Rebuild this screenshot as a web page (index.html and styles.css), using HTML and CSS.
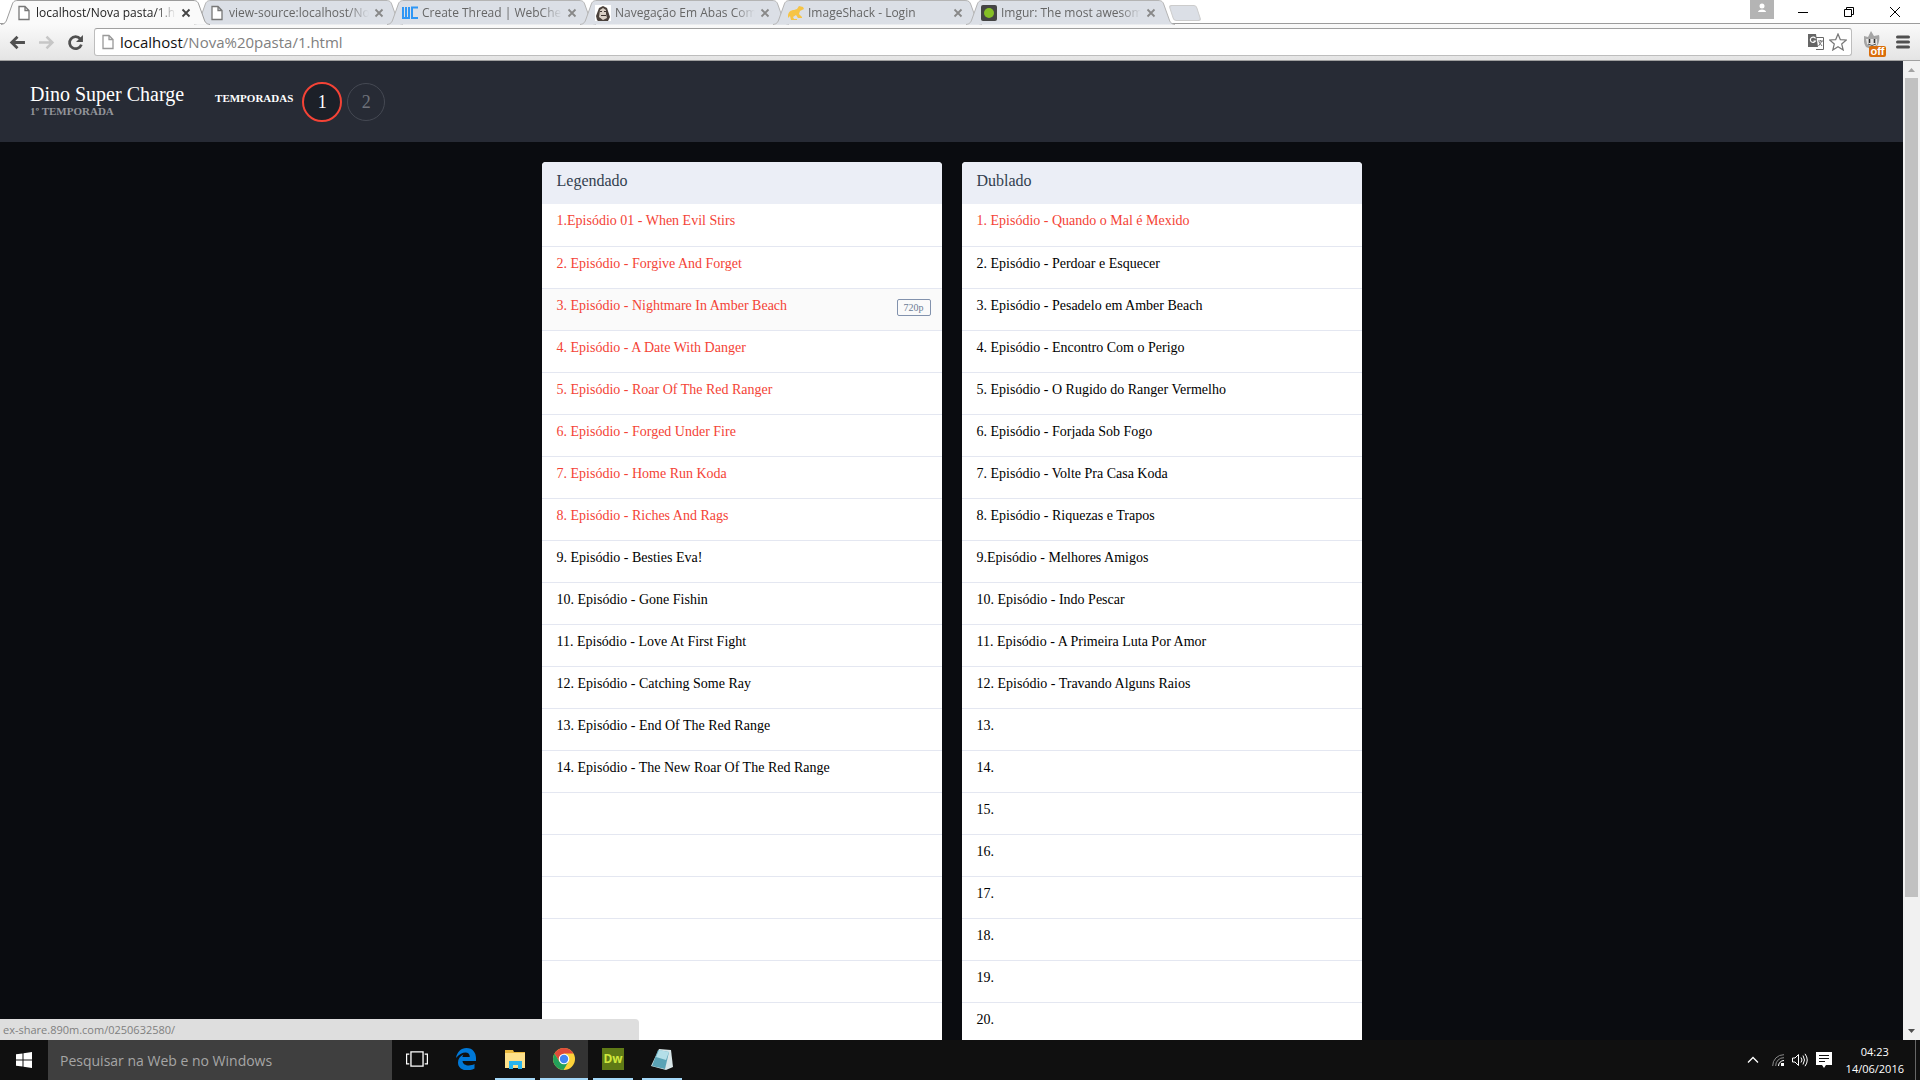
FILE: index.html
```html
<!DOCTYPE html>
<html lang="pt-BR">
<head>
<meta charset="utf-8">
<title>localhost/Nova pasta/1.html</title>
<link rel="stylesheet" href="styles.css">
</head>
<body>
<svg class="defs" aria-hidden="true">
  <symbol id="tab-shape" viewBox="0 0 209 25"><path d="M0 24.500C4 24 5 22 6 19L11 5C12 2 13 .5 17 .5H192C196 .5 197 2 198 5L203 19C204 22 205 24 209 24.500"/></symbol>
  <symbol id="page" viewBox="0 0 12 16"><path d="M1 1.500H7L11 5.500V14.500H1ZM7 1.500V5.500H11" fill="#fff" stroke="currentColor" stroke-width="1.300"/></symbol>
  <symbol id="x" viewBox="0 0 10 10"><path d="M1.500 1.500L8.500 8.500M8.500 1.500L1.500 8.500" stroke="currentColor" stroke-width="1.800"/></symbol>
</svg>

<div class="window">
  <div class="tabstrip">
    <div class="tab active"><svg class="shape"><use href="#tab-shape"/></svg><svg class="fav" viewBox="-2 0 16 16"><use href="#page" width="12" height="16"/></svg><span class="tab-title">localhost/Nova pasta/1.ht</span><button class="close" aria-label="Fechar guia"><svg><use href="#x"/></svg></button></div>
    <div class="tab"><svg class="shape"><use href="#tab-shape"/></svg><svg class="fav" viewBox="-2 0 16 16"><use href="#page" width="12" height="16"/></svg><span class="tab-title">view-source:localhost/No</span><button class="close" aria-label="Fechar guia"><svg><use href="#x"/></svg></button></div>
    <div class="tab"><svg class="shape"><use href="#tab-shape"/></svg><svg class="fav" viewBox="0 0 16 16"><path d="M1 2V13H7V2M4 2V13M16 2.500H10V13H16" fill="none" stroke="#2f97f5" stroke-width="2"/></svg><span class="tab-title">Create Thread | WebCheat</span><button class="close" aria-label="Fechar guia"><svg><use href="#x"/></svg></button></div>
    <div class="tab"><svg class="shape"><use href="#tab-shape"/></svg><svg class="fav" viewBox="0 0 16 16"><path fill="#fff" d="M0 0H16V16H0Z"/><path fill="#4a413b" d="M2 15L1 11L4 3L8 1L12 3L15 12L13 16H3Z"/><path fill="#d8cfc4" d="M5 5L8 3L11 5V9L12 13L8 15L4 12Z"/><path stroke="#3c342f" d="M5 6.500H7M9 6.500H11M6 10.500H11"/></svg><span class="tab-title">Navegação Em Abas Com</span><button class="close" aria-label="Fechar guia"><svg><use href="#x"/></svg></button></div>
    <div class="tab"><svg class="shape"><use href="#tab-shape"/></svg><svg class="fav" viewBox="0 0 16 16"><path fill="#f6c445" d="M0 11C0 7 3 5 6 5L9 4L11 1L15 2L16 4L12 6L11 9L14 12V13H10L8 10L5 12L6 14H9V15H3L2 11L0 13Z"/></svg><span class="tab-title">ImageShack - Login</span><button class="close" aria-label="Fechar guia"><svg><use href="#x"/></svg></button></div>
    <div class="tab"><svg class="shape"><use href="#tab-shape"/></svg><svg class="fav" viewBox="0 0 16 16"><rect width="16" height="16" rx="2" fill="#444"/><circle cx="8" cy="8" r="5" fill="#85bf25"/></svg><span class="tab-title">Imgur: The most awesome</span><button class="close" aria-label="Fechar guia"><svg><use href="#x"/></svg></button></div>
    <button class="newtab" aria-label="Nova guia"></button>
    <div class="winbtns">
      <button class="user" aria-label="Usuário"><svg viewBox="0 0 24 19"><circle cx="12" cy="6" r="2.500" fill="#fff"/><path fill="#fff" d="M8 12C8 8.500 16 8.500 16 12Z"/></svg></button>
      <button aria-label="Minimizar"><svg viewBox="0 0 46 24"><path d="M18 12.500H28"/></svg></button>
      <button aria-label="Restaurar"><svg viewBox="0 0 46 24"><path d="M18.500 9.500H25.500V16.500H18.500ZM20.500 9.500V7.500H27.500V14.500H25.500"/></svg></button>
      <button aria-label="Fechar"><svg viewBox="0 0 46 24"><path d="M18 7L28 17M28 7L18 17"/></svg></button>
    </div>
  </div>

  <div class="toolbar">
    <button aria-label="Voltar"><svg viewBox="0 0 16 16"><path d="M15 8H3M8 2.500L2.500 8L8 13.500" fill="none" stroke="#505050" stroke-width="2.600"/></svg></button>
    <button aria-label="Avançar"><svg viewBox="0 0 16 16"><path d="M1 8H13M8 2.500L13.500 8L8 13.500" fill="none" stroke="#c6c6c6" stroke-width="2.400"/></svg></button>
    <button aria-label="Recarregar"><svg viewBox="0 0 16 16"><path d="M12.500 4.500A5.700 5.700 0 1 0 13.500 10" fill="none" stroke="#505050" stroke-width="2.600"/><path d="M15 1V7.500H8.500Z" fill="#505050"/></svg></button>
    <div class="omnibox">
      <svg class="doc" viewBox="0 0 12 16"><use href="#page"/></svg>
      <label class="url" for="url"><b>localhost</b>/Nova%20pasta/1.html</label>
      <input id="url" type="text">
      <svg class="tool" viewBox="0 0 16 16"><path fill="#fff" stroke="#666" d="M6 3.500H15.500V15.500H8"/><path fill="#666" d="M0 0H8L10 13H0Z"/><path d="M7.500 4.500A2.700 2.700 0 1 0 7.500 7H5.500" fill="none" stroke="#fff" stroke-width="1.200"/><path d="M10 7H15M12.500 6V7M14 7L10.500 12M11 8L14 12" fill="none" stroke="#777"/></svg>
      <svg class="star" viewBox="0 0 18 18"><path d="M9 1L11.300 6.600L17.300 7L12.700 11L14.200 17L9 13.700L3.800 17L5.300 11L.7 7L6.700 6.600Z" fill="#fff" stroke="#777" stroke-width="1.200"/></svg>
    </div>
    <button class="ext" aria-label="Extensão"><svg viewBox="0 0 22 24"><path fill="#a5a5a5" d="M2 17C-1 12 0 9 0 6L4 7L7 1L10 6L15 5C16 9 15 15 12 17L7 19Z"/><path fill="#e4e4e4" d="M2 9H13V15L8 17L3 14Z"/><path d="M5.500 9V13M10.500 9V13" fill="none" stroke="#333" stroke-width="1.600"/><path d="M4 14Q8 17 12 14" fill="none" stroke="#555"/></svg><span>off</span></button>
    <button class="menu" aria-label="Menu"><svg viewBox="0 0 14 14"><path d="M1.500 2H12.500M1.500 7H12.500M1.500 12H12.500" stroke="#505050" stroke-width="3" stroke-linecap="round"/></svg></button>
  </div>

  <div class="viewport">
    <div class="site">
      <header class="topbar">
        <div class="show"><h1>Dino Super Charge</h1><p>1º TEMPORADA</p></div>
        <span class="label">TEMPORADAS</span>
        <nav class="seasons"><a class="current" href="#">1</a><a href="#">2</a></nav>
      </header>
      <main class="lists">
        <section class="card">
          <h2>Legendado</h2>
          <ul>
            <li><a href="#">1.Episódio 01 - When Evil Stirs</a></li>
            <li><a href="#">2. Episódio - Forgive And Forget</a></li>
            <li class="hover"><a href="#">3. Episódio - Nightmare In Amber Beach</a><span class="badge">720p</span></li>
            <li><a href="#">4. Episódio - A Date With Danger</a></li>
            <li><a href="#">5. Episódio - Roar Of The Red Ranger</a></li>
            <li><a href="#">6. Episódio - Forged Under Fire</a></li>
            <li><a href="#">7. Episódio - Home Run Koda</a></li>
            <li><a href="#">8. Episódio - Riches And Rags</a></li>
            <li>9. Episódio - Besties Eva!</li>
            <li>10. Episódio - Gone Fishin</li>
            <li>11. Episódio - Love At First Fight</li>
            <li>12. Episódio - Catching Some Ray</li>
            <li>13. Episódio - End Of The Red Range</li>
            <li>14. Episódio - The New Roar Of The Red Range</li>
            <li></li><li></li><li></li><li></li><li></li><li></li>
          </ul>
        </section>
        <section class="card">
          <h2>Dublado</h2>
          <ul>
            <li><a href="#">1. Episódio - Quando o Mal é Mexido</a></li>
            <li>2. Episódio - Perdoar e Esquecer</li>
            <li>3. Episódio - Pesadelo em Amber Beach</li>
            <li>4. Episódio - Encontro Com o Perigo</li>
            <li>5. Episódio - O Rugido do Ranger Vermelho</li>
            <li>6. Episódio - Forjada Sob Fogo</li>
            <li>7. Episódio - Volte Pra Casa Koda</li>
            <li>8. Episódio - Riquezas e Trapos</li>
            <li>9.Episódio - Melhores Amigos</li>
            <li>10. Episódio - Indo Pescar</li>
            <li>11. Episódio - A Primeira Luta Por Amor</li>
            <li>12. Episódio - Travando Alguns Raios</li>
            <li>13.</li><li>14.</li><li>15.</li><li>16.</li><li>17.</li><li>18.</li><li>19.</li><li>20.</li>
          </ul>
        </section>
      </main>
    </div>
    <div class="scrollbar">
      <svg viewBox="0 0 17 17"><path d="M5 11L8.500 7L12 11Z" fill="#a3a3a3"/></svg>
      <div class="track"><div class="thumb"></div></div>
      <svg viewBox="0 0 17 17"><path d="M5 6L8.500 10L12 6Z" fill="#505050"/></svg>
    </div>
    <div class="status">ex-share.890m.com/0250632580/</div>
  </div>

  <div class="taskbar">
    <button class="start" aria-label="Iniciar"><svg viewBox="0 0 16 16"><path fill="#fff" d="M0 2.300L6.500 1.400V7.500H0ZM7.500 1.200L16 0V7.500H7.500ZM0 8.500H6.500V14.600L0 13.700ZM7.500 8.500H16V16L7.500 14.800Z"/></svg></button>
    <input class="search" type="text" placeholder="Pesquisar na Web e no Windows" aria-label="Pesquisar">
    <button class="app" aria-label="Visão de tarefas"><svg viewBox="0 0 20 16"><path d="M4.500 1.500H15.500V14.500H4.500ZM3 3.500H.5V12.500H3M17 3.500H19.500V12.500H17" fill="none" stroke="#fff" stroke-width="1.200"/></svg></button>
    <button class="app" aria-label="Edge"><svg viewBox="0 0 20 22"><path fill="#0078d7" d="M0 10C1 4 5 0 10.500 0C17 0 20 5 20 10V13H6.500C7 18 14 18.500 18.500 16V20.500C12 24 2 22.500 2 14.500C2 11 4 8 7.500 6.500C6.700 7.500 6.500 8.500 6.400 9H13.800C13.800 3 6 3 0 10Z"/></svg></button>
    <button class="app open first" aria-label="Explorador"><svg viewBox="0 0 22 20"><path fill="#e9b83e" d="M1 1H9L10 3H21V19H1Z"/><path fill="#fde08a" d="M1 4H21V19H1Z"/><path fill="#2ab5ee" d="M5 12H18V20H14V16H9V20H5Z"/></svg></button>
    <button class="app open focus" aria-label="Chrome"><svg viewBox="0 0 22 22"><circle cx="11" cy="11" r="11" fill="#fdd23a"/><path fill="#de4b3b" d="M1.500 5.500A11 11 0 0 1 20.500 5.500H11L6.300 13.800Z"/><path fill="#23a05a" d="M1.500 5.500A11 11 0 0 0 10.500 22L15.500 13.600H6.300Z"/><circle cx="11" cy="11" r="5.300" fill="#fff"/><circle cx="11" cy="11" r="4.200" fill="#4285f4"/></svg></button>
    <button class="app open" aria-label="Dreamweaver"><span class="dw">Dw</span></button>
    <button class="app open" aria-label="Bloco de notas"><svg viewBox="0 0 22 22"><path fill="#d9e6e8" d="M8 1L20 2L22 19L15 22L0 18Z"/><path fill="#5ba3b5" d="M7 2L18 4L14 21L1 18Z"/><path fill="#b4dfe8" d="M8 2L18 4L15 12L5 9Z"/></svg></button>
    <div class="tray">
      <svg class="t12 up" viewBox="0 0 12 12"><path d="M1 8.500L6 3.500L11 8.500" fill="none" stroke="#fff" stroke-width="1.300"/></svg>
      <svg class="t12" viewBox="0 0 12 12"><path d="M.7 12A11 11 0 0 1 12 .7M3.700 12A8 8 0 0 1 12 3.700" fill="none" stroke="#8a8a8a"/><path d="M6.500 12A5.500 5.500 0 0 1 12 6.500" fill="none" stroke="#fff"/><path fill="#fff" d="M9 12V9H12V12Z"/></svg>
      <svg class="t16" viewBox="0 0 16 14"><path d="M.5 5H3L6.500 1.500V12.500L3 9H.5ZM9 4.500Q11 7 9 9.500M11 2.500Q14 7 11 11.500M13 .8Q17.500 7 13 13.200" fill="none" stroke="#fff"/></svg>
      <svg class="t16" viewBox="0 0 16 16"><path fill="#fff" d="M0 0H16V13H10L8 16L6 13H0Z"/><path d="M3 3.500H13M3 6.500H13M3 9.500H9" stroke="#111"/></svg>
      <div class="clock"><time>04:23</time><time>14/06/2016</time></div>
      <button class="desktop" aria-label="Mostrar área de trabalho"></button>
    </div>
  </div>
</div>
</body>
</html>
```
FILE: styles.css
```css
* { box-sizing: border-box; }
body { margin: 0; font-family: "Open Sans", "Noto Sans", sans-serif; }
button { border: 0; padding: 0; background: none; display: flex; align-items: center; justify-content: center; font: inherit; }
svg { display: block; flex: none; }
.defs { position: absolute; width: 0; height: 0; }
.window { display: flex; flex-direction: column; height: 100vh; overflow: hidden; }

/* Browser chrome */
.tabstrip { display: flex; height: 24px; background: #fff; border-bottom: 1px solid #9c9c9c; flex: none; padding-left: 1px; }
.tab { position: relative; display: flex; align-items: center; width: 209px; height: 24px; margin-right: -16px; padding: 1px 16px 0 15px; color: #666; font-size: 12px; flex: none; }
.shape { position: absolute; inset: 0; width: 209px; height: 25px; fill: #dbdfe6; stroke: #b4b4b4; }
.tab.active { color: #222; z-index: 1; }
.active .shape { fill: #fafafa; stroke: #9c9c9c; }
.fav { position: relative; width: 16px; height: 16px; margin-right: 4px; color: #777; }
.tab-title { position: relative; flex: 1; min-width: 0; overflow: hidden; white-space: nowrap; mask-image: linear-gradient(90deg, #000 85%, transparent); }
.close { position: relative; width: 16px; height: 16px; margin-left: 2px; color: #888; }
.close svg { width: 10px; height: 10px; }
.active .close { color: #444; }
.newtab { width: 28px; height: 16px; margin: 5px 0 0 12px; background: #dbdfe6; border: 1px solid #ccc; border-radius: 3px; transform: skewX(18deg); }
.winbtns { display: flex; margin-left: auto; padding-right: 2px; align-items: flex-start; }
.winbtns button { width: 46px; height: 24px; }
.winbtns svg { width: 46px; height: 24px; fill: none; stroke: #000; }
.winbtns .user { width: 24px; height: 19px; background: #b4b4b4; margin-right: 6px; }
.winbtns .user svg { width: 24px; height: 19px; stroke: none; }
.toolbar { display: flex; align-items: center; height: 37px; flex: none; padding: 0 9px; gap: 12px; background: linear-gradient(#fafafa, #e4e4e4); border-bottom: 1px solid #a0a0a0; }
.toolbar > button { width: 17px; height: 24px; flex: none; }
.toolbar > button svg { width: 17px; height: 17px; }
.omnibox { display: flex; align-items: center; flex: 1; height: 28px; margin-left: -2px; padding: 0 4px 0 7px; background: #fff; border: 1px solid #bdbdbd; border-top-color: #a0a0a0; border-radius: 3px; }
.doc { width: 12px; height: 16px; color: #999; margin-right: 6px; }
.url { font-size: 15px; line-height: 24px; color: #808080; }
.url b { font-weight: 400; color: #111; }
.omnibox input { flex: 1; min-width: 0; border: 0; background: none; }
.tool { width: 16px; height: 16px; margin-right: 5px; }
.star { width: 18px; height: 18px; }
.toolbar .ext { position: relative; width: 22px; margin-right: -4px; }
.toolbar .ext svg { width: 22px; height: 24px; }
.ext span { position: absolute; right: 0; bottom: -3px; width: 17px; height: 11px; background: #d96d0a; color: #fff; font: bold 11px/10px "Liberation Sans", sans-serif; border-radius: 2px; }
.toolbar .menu svg { width: 14px; height: 14px; }

/* Page */
.viewport { position: relative; display: flex; flex: 1; min-height: 0; }
.site { flex: 1; overflow: hidden; background: #0a0c10; font-family: "Liberation Serif", serif; }
.topbar { display: flex; height: 81px; padding: 21px 30px; background: #272b35; color: #fff; }
.show h1 { margin: 0; font-size: 20px; line-height: 24px; font-weight: 400; }
.show p { margin: 0; font-size: 11px; line-height: 10px; font-weight: 700; color: #93959a; }
.label { margin-left: 31px; font-size: 11px; line-height: 32px; font-weight: 700; }
.seasons { display: flex; align-items: center; gap: 5px; height: 40px; margin-left: 9px; }
.seasons a { width: 38px; height: 38px; border: 1px solid #454953; border-radius: 50%; color: #70737b; text-align: center; text-decoration: none; font-size: 18px; line-height: 36px; }
.seasons .current { width: 40px; height: 40px; border: 2px solid #f44336; background: #1c2028; color: #fff; }
.lists { display: flex; justify-content: center; gap: 20px; padding: 20px; }
.card { width: 400px; background: #fff; border-radius: 4px; overflow: hidden; }
.card h2 { margin: 0; height: 42px; padding: 8px 15px; background: #ebeef6; color: #323e4f; font-size: 16px; line-height: 22px; font-weight: 400; }
.card ul { margin: 0; padding: 0; list-style: none; }
.card li { display: flex; justify-content: space-between; height: 42px; padding: 8px 11px 0 15px; border-bottom: 1px solid #e4e7f1; font-size: 14px; line-height: 18px; color: #000; }
.card li:first-child { height: 43px; }
.card li a { color: #f44336; text-decoration: none; }
.card .hover { background: #fafafa; }
.badge { width: 34px; height: 17px; margin-top: 2px; border: 1px solid #8292ad; border-radius: 2px; color: #6b7b95; font-size: 10px; line-height: 15px; text-align: center; }
.scrollbar { display: flex; flex-direction: column; width: 17px; background: #f1f1f1; }
.scrollbar svg { width: 17px; height: 17px; }
.track { display: flex; flex: 1; flex-direction: column; padding: 0 2px; }
.track::after { content: ""; flex: 2; }
.thumb { flex: 13; background: #c1c1c1; }
.status { position: absolute; left: 0; bottom: 0; width: 639px; height: 21px; padding-left: 3px; background: #dedede; color: #808080; font-size: 11px; line-height: 21px; border-top-right-radius: 4px; }

/* Taskbar */
.taskbar { display: flex; height: 40px; flex: none; background: #101010; color: #fff; }
.start { width: 48px; }
.start svg { width: 16px; height: 16px; }
.search { width: 344px; border: 0; padding: 0 12px; background: #3f3f3f; font: 14px "Open Sans", sans-serif; }
.search::placeholder { color: #a6a6a6; opacity: 1; }
.app { width: 49px; border-bottom: 2px solid transparent; }
.app svg { width: 22px; height: 22px; }
.open { width: 40px; margin-left: 9px; border-color: #a4d8f8; }
.first, .focus, .focus + .open { margin-left: 5px; }
.focus { width: 48px; background: #333; }
.dw { width: 22px; height: 22px; background: #5f7a16; color: #cfe83c; font-size: 12px; font-weight: 700; line-height: 22px; }
.tray { display: flex; align-items: center; gap: 8px; margin-left: auto; padding-right: 4px; }
.t12 { width: 12px; height: 12px; }
.up { margin-right: 5px; }
.t16 { width: 16px; height: 16px; }
.clock { display: flex; flex-direction: column; align-items: center; font-size: 11px; line-height: 17px; margin-left: 6px; }
.desktop { width: 1px; height: 40px; margin-left: 3px; background: #666; }
```
